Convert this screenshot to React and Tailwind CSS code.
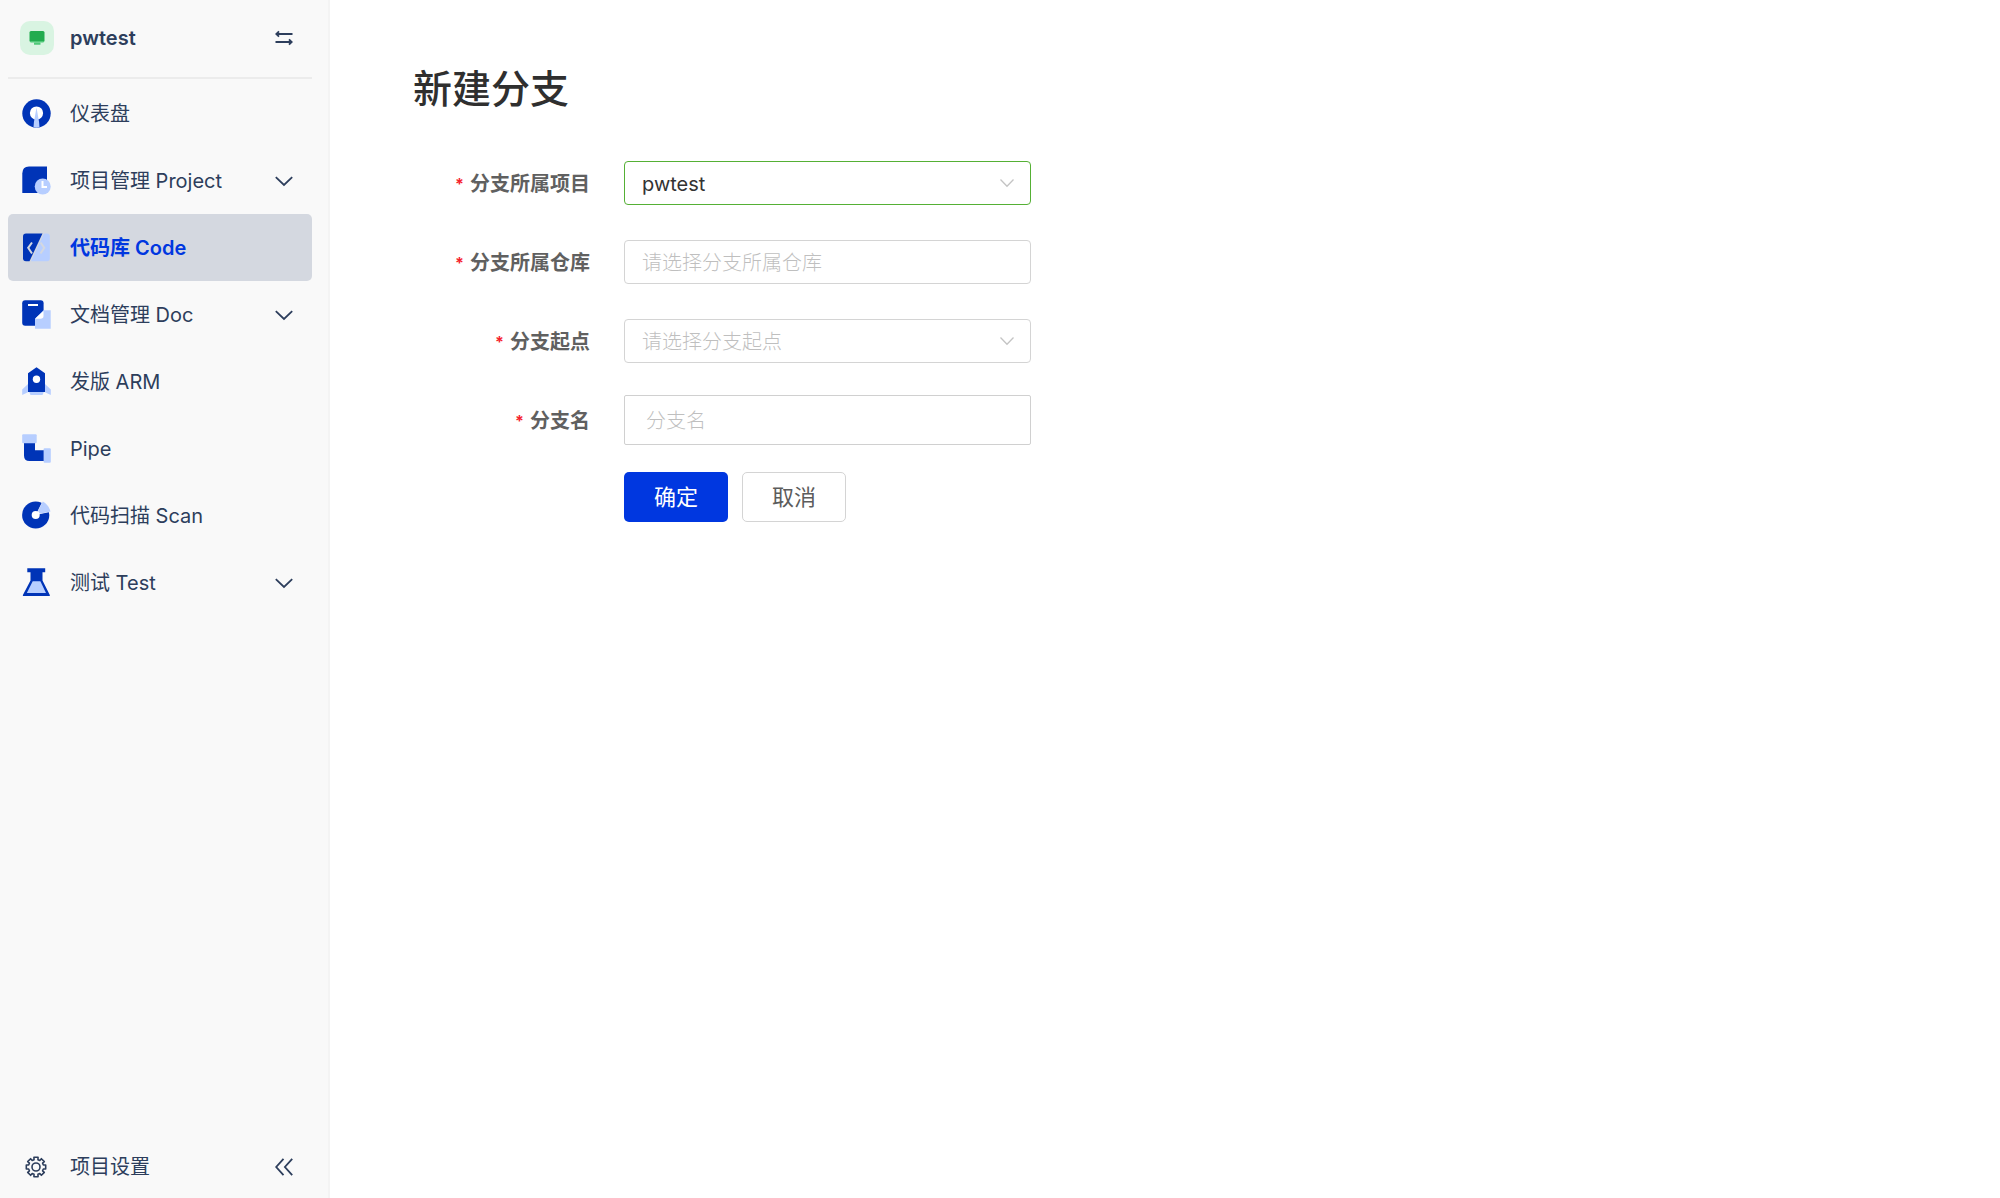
import React, { useState } from 'react';

const DARK = '#0034b7';
const LIGHT = '#b7ceff';

const DashboardIcon = () => (
  <svg viewBox="0 0 29 29" className="h-[29px] w-[29px]">
    <circle cx="14.5" cy="14.5" r="14.2" fill={DARK} />
    <circle cx="14.5" cy="14" r="6.6" fill="#fff" />
    <path d="M14.5 8.5 L16 17 Q17.5 24 17.5 28.3 Q14.5 29 11.5 28.3 Q11.5 24 13 17 Z" fill={LIGHT} />
  </svg>
);

const ProjectIcon = () => (
  <svg viewBox="0 0 29 29" className="h-[29px] w-[29px]">
    <path d="M7 0.5 H25 V27 H0.3 V7.5 Q0.3 0.5 7 0.5 Z" fill={DARK} />
    <circle cx="20.7" cy="20.5" r="8" fill={LIGHT} />
    <path d="M20.5 15 V21 H25" fill="none" stroke="#fff" strokeWidth="2" />
  </svg>
);

const CodeIcon = () => (
  <svg viewBox="0 0 29 29" className="h-[29px] w-[29px]">
    <path d="M4 0.5 H20.5 L7.5 28.3 H4 Q1 28.3 1 25.3 V3.5 Q1 0.5 4 0.5 Z" fill={DARK} />
    <path d="M22 0.5 H25 Q27.8 0.5 27.8 3.5 V25.3 Q27.8 28.3 25 28.3 H9 Z" fill={LIGHT} />
    <path d="M10 9.5 L6.2 14.8 L10 20.5" fill="none" stroke="#d4d8e0" strokeWidth="2" />
    <path d="M18.5 9.5 L22.3 14.8 L18.5 20.5" fill="none" stroke="#d4d8e0" strokeWidth="2" />
  </svg>
);

const DocIcon = () => (
  <svg viewBox="0 0 29 29" className="h-[29px] w-[29px]">
    <rect x="0.2" y="0.3" width="21.4" height="25.5" rx="3" fill={DARK} />
    <rect x="6" y="4" width="10" height="2" fill="#fff" />
    <path d="M21.5 10.3 H28.7 V28.7 H13 V18.7 Z" fill={LIGHT} />
    <path d="M21.5 11 V16 Q21.5 18.7 18.5 18.7 H13 Z" fill="#fff" />
  </svg>
);

const ArmIcon = () => (
  <svg viewBox="0 0 29 29" className="h-[29px] w-[29px]">
    <path d="M6 17 L0.2 22.5 V28 L6.5 25 H22.5 L28.8 28 V22.5 L23 17 Z" fill={LIGHT} />
    <path d="M7 24.5 H22 L20.5 28 H8.5 Z" fill={LIGHT} />
    <path d="M14.5 0.2 L23 6.3 V25 H6 V6.3 Z" fill={DARK} />
    <circle cx="14.5" cy="12.3" r="3.7" fill="#fff" />
  </svg>
);

const PipeIcon = () => (
  <svg viewBox="0 0 29 29" className="h-[29px] w-[29px]">
    <path d="M2 9 H13 V16.3 H22 V27 H7.5 Q2 27 2 21.5 Z" fill={DARK} />
    <rect x="0.2" y="0.2" width="14.5" height="9" rx="1" fill={LIGHT} />
    <rect x="21.6" y="14.3" width="7.2" height="14.5" rx="1" fill={LIGHT} />
  </svg>
);

const ScanIcon = () => (
  <svg viewBox="0 0 29 29" className="h-[29px] w-[29px]">
    <circle cx="13.7" cy="14" r="13.6" fill={DARK} />
    <path d="M13.7 14 L20.6 0 H29 V10.8 Z" fill="#f9f9f9" />
    <path d="M16 10 L20.8 0.6 Q26.5 3.5 28.5 10.5 L17.5 12.8 Z" fill={LIGHT} />
    <circle cx="13.7" cy="14" r="4" fill="#fff" />
  </svg>
);

const TestIcon = () => (
  <svg viewBox="0 0 29 29" className="h-[29px] w-[29px]">
    <path d="M5.3 0.3 H23.2 V4.3 H20.5 V12.5 L27.8 27 V28 H0.9 V27 L8.5 12.5 V4.3 H5.3 Z" fill={DARK} />
    <path d="M10.7 13.3 H18.4 L24 25 H4.8 Z" fill={LIGHT} />
  </svg>
);

const ChevronDown = () => (
  <svg viewBox="0 0 18 18" className="h-[18px] w-[18px]" fill="none" stroke="#2d3e5c" strokeWidth="1.8">
    <path d="M0.8 5.2 L9 13 L17.2 5.2" />
  </svg>
);

// eight teeth, four corner points each: [angle offset, radius]
const gearPoints = Array.from({ length: 8 }, (_, i) =>
  [[-15, 7.6], [-12, 9.9], [12, 9.9], [15, 7.6]].map(([offset, r]) => {
    const a = ((i * 45 + offset) * Math.PI) / 180;
    return `${11 + r * Math.sin(a)},${11 - r * Math.cos(a)}`;
  }).join(' ')
).join(' ');

const GearIcon = () => (
  <svg viewBox="0 0 22 22" className="h-[22px] w-[22px]" fill="none" stroke="#2d3e5c" strokeWidth="1.6" strokeLinejoin="round">
    <polygon points={gearPoints} />
    <circle cx="11" cy="11" r="4" />
  </svg>
);

const menu = [
  { name: '仪表盘', Icon: DashboardIcon },
  { name: '项目管理 Project', Icon: ProjectIcon, more: true },
  { name: '代码库 Code', Icon: CodeIcon, active: true },
  { name: '文档管理 Doc', Icon: DocIcon, more: true },
  { name: '发版 ARM', Icon: ArmIcon },
  { name: 'Pipe', Icon: PipeIcon },
  { name: '代码扫描 Scan', Icon: ScanIcon },
  { name: '测试 Test', Icon: TestIcon, more: true },
];

const Sidebar = () => (
  <aside className="sticky top-0 flex h-screen w-[330px] shrink-0 flex-col border-r-2 border-[#f4f4f4] bg-[#f9f9f9] pr-4 pl-2 text-[#2d3e5c]">
    <div className="flex h-[79px] items-center border-b-2 border-[#ececec] pr-[19px] pb-[2px] pl-3">
      <span className="flex h-[34px] w-[34px] items-center justify-center rounded-[10px] bg-[#d9f4e2]">
        <svg viewBox="0 0 16 16" className="h-4 w-4">
          <rect x="0.5" y="1" width="15" height="11" rx="1.5" fill="#22ab4f" />
          <path d="M1 11 H15 Q15 12.5 14 12.5 H2 Q1 12.5 1 11 Z" fill="#4fc878" />
          <rect x="5" y="12.5" width="6.5" height="2.3" rx="0.6" fill="#4fc878" />
        </svg>
      </span>
      <span className="ml-4 flex-1 text-[20px] font-semibold">pwtest</span>
      <button type="button" aria-label="切换项目">
        <svg viewBox="0 0 18 18" className="h-[18px] w-[18px]" fill="none" stroke="#2d3e5c" strokeWidth="1.8">
          <path d="M17.5 5 H1.5 M4 2.3 L1.3 5 L4 7.7" />
          <path d="M0.5 13 H16.5 M14 10.3 L16.7 13 L14 15.7" />
        </svg>
      </button>
    </div>

    <nav className="flex-1 pt-px">
      <ul>
        {menu.map(({ name, Icon, active, more }) => (
          <li key={name}>
            <a
              href="#"
              className={
                active
                  ? 'flex h-[67px] items-center rounded-[5px] bg-[#d4d8e0] pr-[19px] pl-[14px] font-semibold text-[#0037e0]'
                  : 'flex h-[67px] items-center rounded-[5px] pr-[19px] pl-[14px]'
              }
            >
              <Icon />
              <span className="ml-[19px] flex-1 text-[20px]">{name}</span>
              {more && <ChevronDown />}
            </a>
          </li>
        ))}
      </ul>
    </nav>

    <div className="flex h-[62px] items-center pr-[19px] pl-[17px]">
      <a href="#" className="flex flex-1 items-center text-[20px]">
        <GearIcon />
        <span className="ml-[23px]">项目设置</span>
      </a>
      <button type="button" aria-label="收起侧边栏">
        <svg viewBox="0 0 18 18" className="h-[18px] w-[18px]" fill="none" stroke="#2d3e5c" strokeWidth="1.8">
          <path d="M8.5 0.8 L1.2 9 L8.5 17.2" />
          <path d="M17.2 0.8 L9.9 9 L17.2 17.2" />
        </svg>
      </button>
    </div>
  </aside>
);

const SelectArrow = () => (
  <svg
    viewBox="0 0 14 14"
    className="pointer-events-none absolute top-[15px] right-[17px] h-[14px] w-[14px]"
    fill="none"
    stroke="#c4c4c4"
    strokeWidth="1.3"
  >
    <path d="M0.5 3.5 L7 10.3 L13.5 3.5" />
  </svg>
);

const Row = ({ id, label, children }) => (
  <div className="flex min-h-[50px] items-center">
    <label htmlFor={id} className="mr-[34px] flex w-[177px] shrink-0 items-center justify-end pt-[2px] text-[20px] font-bold text-[#606060]">
      <span className="mr-[6px] text-base text-[#f5222d]">*</span>
      {label}
    </label>
    <div className="relative w-[407px]">{children}</div>
  </div>
);

const BranchForm = () => {
  const [project, setProject] = useState('pwtest');
  const [repo, setRepo] = useState('');
  const [start, setStart] = useState('');
  const [branch, setBranch] = useState('');

  return (
    <form onSubmit={(e) => e.preventDefault()} className="mt-10">
      <div className="flex flex-col gap-[29px]">
        <Row id="project" label="分支所属项目">
          <select
            id="project"
            value={project}
            onChange={(e) => setProject(e.target.value)}
            className="block h-11 w-full appearance-none rounded-[4px] border border-[#55b035] bg-white px-[17px] pt-[2px] text-[20px] text-[#333]"
          >
            <option value="pwtest">pwtest</option>
          </select>
          <SelectArrow />
        </Row>

        <Row id="repo" label="分支所属仓库">
          <input
            id="repo"
            type="text"
            value={repo}
            onChange={(e) => setRepo(e.target.value)}
            placeholder="请选择分支所属仓库"
            className="block h-11 w-full rounded-[4px] border border-[#d4d4d4] bg-white px-[17px] pt-[2px] text-[20px] font-light placeholder:text-[#bfbfbf]"
          />
        </Row>

        <Row id="start" label="分支起点">
          <select
            id="start"
            value={start}
            onChange={(e) => setStart(e.target.value)}
            className="block h-11 w-full appearance-none rounded-[4px] border border-[#d4d4d4] bg-white px-[17px] pt-[2px] text-[20px] font-light text-[#bfbfbf]"
          >
            <option value="">请选择分支起点</option>
          </select>
          <SelectArrow />
        </Row>

        <Row id="branch" label="分支名">
          <input
            id="branch"
            type="text"
            value={branch}
            onChange={(e) => setBranch(e.target.value)}
            placeholder="分支名"
            className="block h-[50px] w-full rounded-[2px] border border-[#d0d0d0] bg-white px-[21px] pt-[2px] text-[20px] font-light placeholder:text-[#bfbfbf]"
          />
        </Row>
      </div>

      <div className="mt-[27px] flex gap-[14px] pl-[211px]">
        <button type="submit" className="h-[50px] w-[104px] rounded-[5px] bg-[#0037e0] text-[22px] text-white">
          确定
        </button>
        <button type="button" className="h-[50px] w-[104px] rounded-[5px] border border-[#d4d4d4] bg-white text-[22px] text-[#5c5c5c]">
          取消
        </button>
      </div>
    </form>
  );
};

const App = () => {
  return (
    <div className="flex min-h-screen bg-white font-[Inter,'Noto_Sans_CJK_SC',sans-serif]">
      <Sidebar />
      <main className="flex-1 px-[83px] pt-[60px]">
        <h1 className="text-[39px] leading-[58px] font-medium text-[#2f2f2f]">新建分支</h1>
        <BranchForm />
      </main>
    </div>
  );
};

export default App;
